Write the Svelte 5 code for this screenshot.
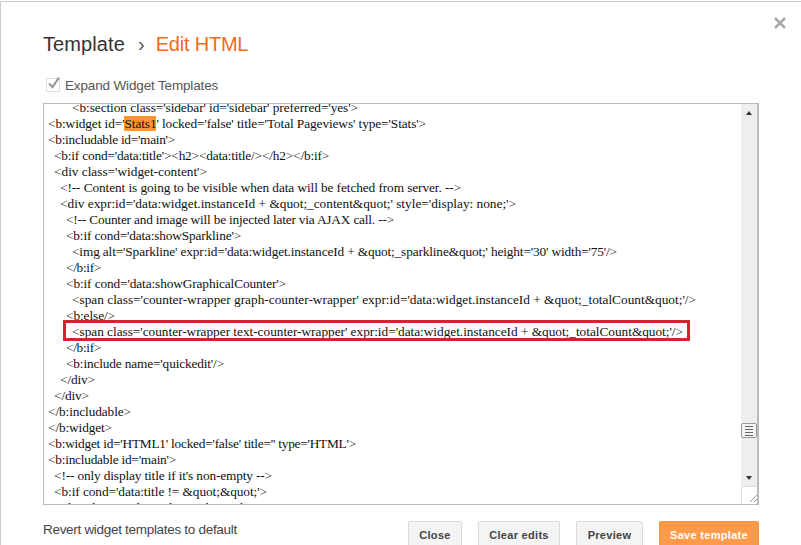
<script>
  // [indent, text, x where the line ends in the editor]
  const lines = [
    [8, "<b:section class='sidebar' id='sidebar' preferred='yes'>", 358],
    [0, "<b:widget id='Stats1' locked='false' title='Total Pageviews' type='Stats'>", 426],
    [0, "<b:includable id='main'>", 175],
    [2, "<b:if cond='data:title'><h2><data:title/></h2></b:if>", 329],
    [2, "<div class='widget-content'>", 207],
    [4, "<!-- Content is going to be visible when data will be fetched from server. -->", 461],
    [4, "<div expr:id='data:widget.instanceId + &quot;_content&quot;' style='display: none;'>", 516],
    [6, "<!-- Counter and image will be injected later via AJAX call. -->", 394],
    [6, "<b:if cond='data:showSparkline'>", 241],
    [8, "<img alt='Sparkline' expr:id='data:widget.instanceId + &quot;_sparkline&quot;' height='30' width='75'/>", 617],
    [6, "</b:if>", 101],
    [6, "<b:if cond='data:showGraphicalCounter'>", 286],
    [8, "<span class='counter-wrapper graph-counter-wrapper' expr:id='data:widget.instanceId + &quot;_totalCount&quot;'/>", 696],
    [6, "<b:else/>", 115],
    [8, "<span class='counter-wrapper text-counter-wrapper' expr:id='data:widget.instanceId + &quot;_totalCount&quot;'/>", 683],
    [6, "</b:if>", 101],
    [6, "<b:include name='quickedit'/>", 224],
    [4, "</div>", 95],
    [2, "</div>", 89],
    [0, "</b:includable>", 131],
    [0, "</b:widget>", 112],
    [0, "<b:widget id='HTML1' locked='false' title='' type='HTML'>", 356],
    [0, "<b:includable id='main'>", 176],
    [2, "<!-- only display title if it's non-empty -->", 272],
    [2, "<b:if cond='data:title != &quot;&quot;'>", 267],
    [4, "<h2 class='title'><data:title/></h2>", 262]
  ];
  const buttons = [
    ["Close", 54],
    ["Clear edits", 82],
    ["Preview", 67]
  ];

  // the reference font is hinted narrower, so track each line to its measured end
  function fit(el, end) {
    const n = el.textContent.length;
    el.style.letterSpacing = (end - 48 - el.getBoundingClientRect().width) / n + "px";
  }
</script>

<div class="dialog">
  <button class="dismiss" aria-label="Close">
    <svg width="12" height="12" viewBox="0 0 12 12">
      <path d="M1 1 L11 11 M11 1 L1 11" stroke="#aaa" stroke-width="2.6" fill="none" />
    </svg>
  </button>

  <h1><span>Template</span><i>›</i><em>Edit HTML</em></h1>

  <label class="expand">
    <span class="box">
      <svg width="16" height="15" viewBox="0 0 16 15">
        <path d="M3 7.5 L6.5 11 L13 1.5" stroke="#999" stroke-width="2.2" fill="none" />
      </svg>
    </span>
    Expand Widget Templates
  </label>

  <div class="editor">
    <div class="code">
      <div class="scroller">
        {#each lines as [indent, text, end]}
          {@const parts = text.split("Stats1")}
          <div class="line" style:padding-left="{indent * 3}px" use:fit={end}>{#if parts.length > 1}{parts[0]}<mark>Stats1</mark>{parts[1]}{:else}{text}{/if}</div>
        {/each}
      </div>
      <div class="callout"></div>
    </div>
    <div class="scrollbar">
      <div class="arrow up"></div>
      <div class="track">
        <div class="thumb"><b></b><b></b><b></b><b></b></div>
      </div>
      <div class="arrow down"></div>
      <div class="corner">
        <svg width="16" height="16" viewBox="0 0 16 16">
          <path d="M8 15 L15 8 M12 15 L15 12" stroke="#999" stroke-width="1" fill="none" />
        </svg>
      </div>
    </div>
  </div>

  <div class="footer">
    <span class="revert">Revert widget templates to default</span>
    <div class="actions">
      {#each buttons as [label, width]}
        <button class="btn" style:width="{width}px">{label}</button>
      {/each}
      <button class="btn save">Save template</button>
    </div>
  </div>
</div>

<style>
  :global(body) {
    background: #fff;
    overflow: hidden;
  }

  .dialog {
    position: relative;
    box-sizing: border-box;
    height: 545px;
    margin-top: 1px;
    padding: 30px 42px 0 42px;
    overflow: hidden;
    background: #fff;
    border-top: 1px solid #ccc;
    border-left: 1px solid #ccc;
    font-family: "Liberation Sans", Arial, sans-serif;
  }

  .dismiss {
    position: absolute;
    top: 15px;
    right: 15px;
    width: 12px;
    height: 12px;
    padding: 0;
    border: 0;
    background: none;
    line-height: 0;
  }

  h1 {
    display: flex;
    align-items: baseline;
    margin: 0;
    font-size: 20px;
    font-weight: 400;
    line-height: 24px;
    color: #333;
  }

  h1 span {
    letter-spacing: 0.1px;
  }

  h1 i {
    margin: 0 11px 0 13px;
    font-style: normal;
    color: #555;
  }

  h1 em {
    font-style: normal;
    letter-spacing: -0.2px;
    color: #f26a1b;
  }

  .expand {
    display: flex;
    align-items: center;
    gap: 5px;
    height: 18px;
    margin: 20px 0 9px 3px;
    font-size: 13.5px;
    letter-spacing: -0.15px;
    color: #555;
  }

  .box {
    box-sizing: border-box;
    width: 14px;
    height: 14px;
    border: 1px solid #ddd;
    line-height: 0;
  }

  .box svg {
    margin: -3px 0 0 -1px;
  }

  .editor {
    display: flex;
    box-sizing: border-box;
    width: 716px;
    height: 402px;
    border: 1px solid #bbb;
    border-right-width: 2px;
  }

  .code {
    position: relative;
    flex: 1;
    overflow: hidden;
  }

  .scroller {
    margin-top: -4px;
    padding-left: 4px;
    font-family: "Liberation Serif", "Times New Roman", serif;
    font-size: 13.33px;
    line-height: 16px;
    color: #111;
  }

  .line {
    width: fit-content;
    white-space: pre;
  }

  mark {
    background: #ff9632;
    color: #111;
  }

  .callout {
    position: absolute;
    left: 19px;
    top: 216px;
    width: 621px;
    height: 15px;
    border: 3px solid #d2232f;
  }

  .scrollbar {
    display: flex;
    flex-direction: column;
    width: 16px;
    background: #eee;
  }

  .arrow {
    position: relative;
    height: 17px;
  }

  .arrow::after {
    content: "";
    position: absolute;
    left: 5px;
    border-left: 3.5px solid transparent;
    border-right: 3.5px solid transparent;
  }

  .up::after {
    top: 7px;
    border-bottom: 4px solid #333;
  }

  .down::after {
    top: 7px;
    border-top: 4px solid #333;
  }

  .track {
    display: flex;
    flex: 1;
    flex-direction: column;
    justify-content: flex-end;
    padding-bottom: 31px;
  }

  .thumb {
    display: flex;
    flex-direction: column;
    justify-content: center;
    gap: 2px;
    box-sizing: border-box;
    height: 15px;
    padding: 0 3px;
    background: #f4f4f4;
    border: 1px solid #999;
    border-radius: 2px;
  }

  .thumb b {
    height: 1px;
    background: #666;
  }

  .corner {
    height: 17px;
    background: #fff;
    border-top: 1px solid #ddd;
    border-left: 1px solid #ddd;
    line-height: 0;
  }

  .footer {
    display: flex;
    justify-content: space-between;
    width: 716px;
    margin-top: 16px;
  }

  .revert {
    font-size: 13.5px;
    letter-spacing: -0.3px;
    line-height: 17px;
    color: #444;
  }

  .actions {
    display: flex;
    gap: 16px;
  }

  .btn {
    box-sizing: border-box;
    height: 29px;
    padding: 0 0 2px;
    background: #f4f4f4;
    border: 1px solid #dcdcdc;
    border-radius: 2px;
    font-family: "Liberation Sans", Arial, sans-serif;
    font-size: 11px;
    font-weight: 700;
    letter-spacing: 0.3px;
    color: #444;
  }

  .save {
    width: 100px;
    background: #ff9a4a;
    border-color: #f79240;
    color: #fff;
  }
</style>
